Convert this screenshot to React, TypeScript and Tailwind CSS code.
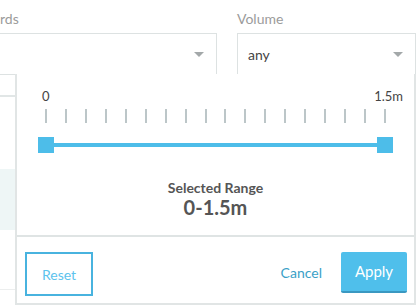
import React from "react";

const ticks = Array.from({ length: 18 }, (_, i) => i);

function Arrow() {
  return (
    <svg width="10" height="5" viewBox="0 0 10 5" className="block">
      <path d="M0 0 L10 0 L5 5 Z" fill="#a3a8a9" />
    </svg>
  );
}

export default function App() {
  return (
    <div
      className="relative w-[417px] h-[307px] overflow-hidden bg-white"
      style={{ fontFamily: "Lato, 'Open Sans', sans-serif" }}
    >
      {/* form fields row */}
      <div className="flex pt-[9px]">
        <div className="w-[217px] shrink-0">
          <div className="h-[21px] text-[14px] leading-[20px] text-[#9b9b9b]">rds</div>
          <div className="mt-[3px] h-[42px] border border-l-0 border-[#dde2e2] flex items-center justify-end pr-[12px]">
            <Arrow />
          </div>
        </div>
        <div className="ml-[20px] w-[179px] shrink-0">
          <div className="h-[21px] text-[14px] leading-[20px] text-[#9b9b9b]">Volume</div>
          <div className="mt-[3px] h-[42px] border border-[#dde2e2] flex items-center justify-between pl-[10px] pr-[12px]">
            <span className="text-[14px] text-[#444] leading-[20px] pt-[1px]">any</span>
            <Arrow />
          </div>
        </div>
      </div>

      {/* table rows behind the popover */}
      <div className="w-[15px]">
        <div className="h-[20px]" />
        <div className="h-[2px] bg-[#e1e6e6]" />
        <div className="h-[72px]" />
        <div className="h-[61px] bg-[#eef6f6]" />
        <div className="h-[59px]" />
        <div className="h-[1px] bg-[#eceeee]" />
      </div>

      {/* popover */}
      <div className="absolute left-[15px] top-[74px] w-[401px] h-[231px] bg-white border-2 border-t-0 border-[#e1e5e5] flex flex-col">
        <div className="h-[161px] pt-[14px]">
          <div className="flex justify-between text-[13px] leading-[16px] text-[#444] pl-[25px] pr-[11px]">
            <span>0</span>
            <span>1.5m</span>
          </div>
          <div className="px-[20px]">
            <div className="flex justify-between mt-[5px] px-[8px] h-[14px]">
              {ticks.map((t) => (
                <div key={t} className="w-[2px] h-[14px] bg-[#bcc6c8]" />
              ))}
            </div>
            <div className="relative mt-[14px] h-[16px] flex items-center">
              <div className="absolute left-[8px] right-[8px] h-[4px] bg-[#4dbde9]" />
              <div className="absolute left-[1px] top-0 w-[16px] h-[16px] bg-[#4dbde9]" />
              <div className="absolute right-[1px] top-0 w-[16px] h-[16px] bg-[#4dbde9]" />
            </div>
          </div>
          <div className="mt-[26px] text-center text-[#555] font-bold">
            <div className="text-[14px] leading-[17px]">Selected Range</div>
            <div className="text-[20px] leading-[22px]">0-1.5m</div>
          </div>
        </div>
        <div className="h-[2px] bg-[#dfe4e4]" />
        <div className="flex items-start justify-between pl-[8px] pr-[7px] pt-[15px]">
          <button className="w-[68px] h-[44px] border-2 border-[#48b3df] text-[14px] text-[#5cc3ed] bg-white">
            Reset
          </button>
          <div className="flex items-center gap-[19px]">
            <span className="text-[14px] text-[#3a9fc7]">Cancel</span>
            <button className="w-[66px] h-[41px] rounded-[2px] bg-[#4fbfeb] border-b-2 border-[#3a98c1] text-white text-[15px]">
              Apply
            </button>
          </div>
        </div>
      </div>
    </div>
  );
}
